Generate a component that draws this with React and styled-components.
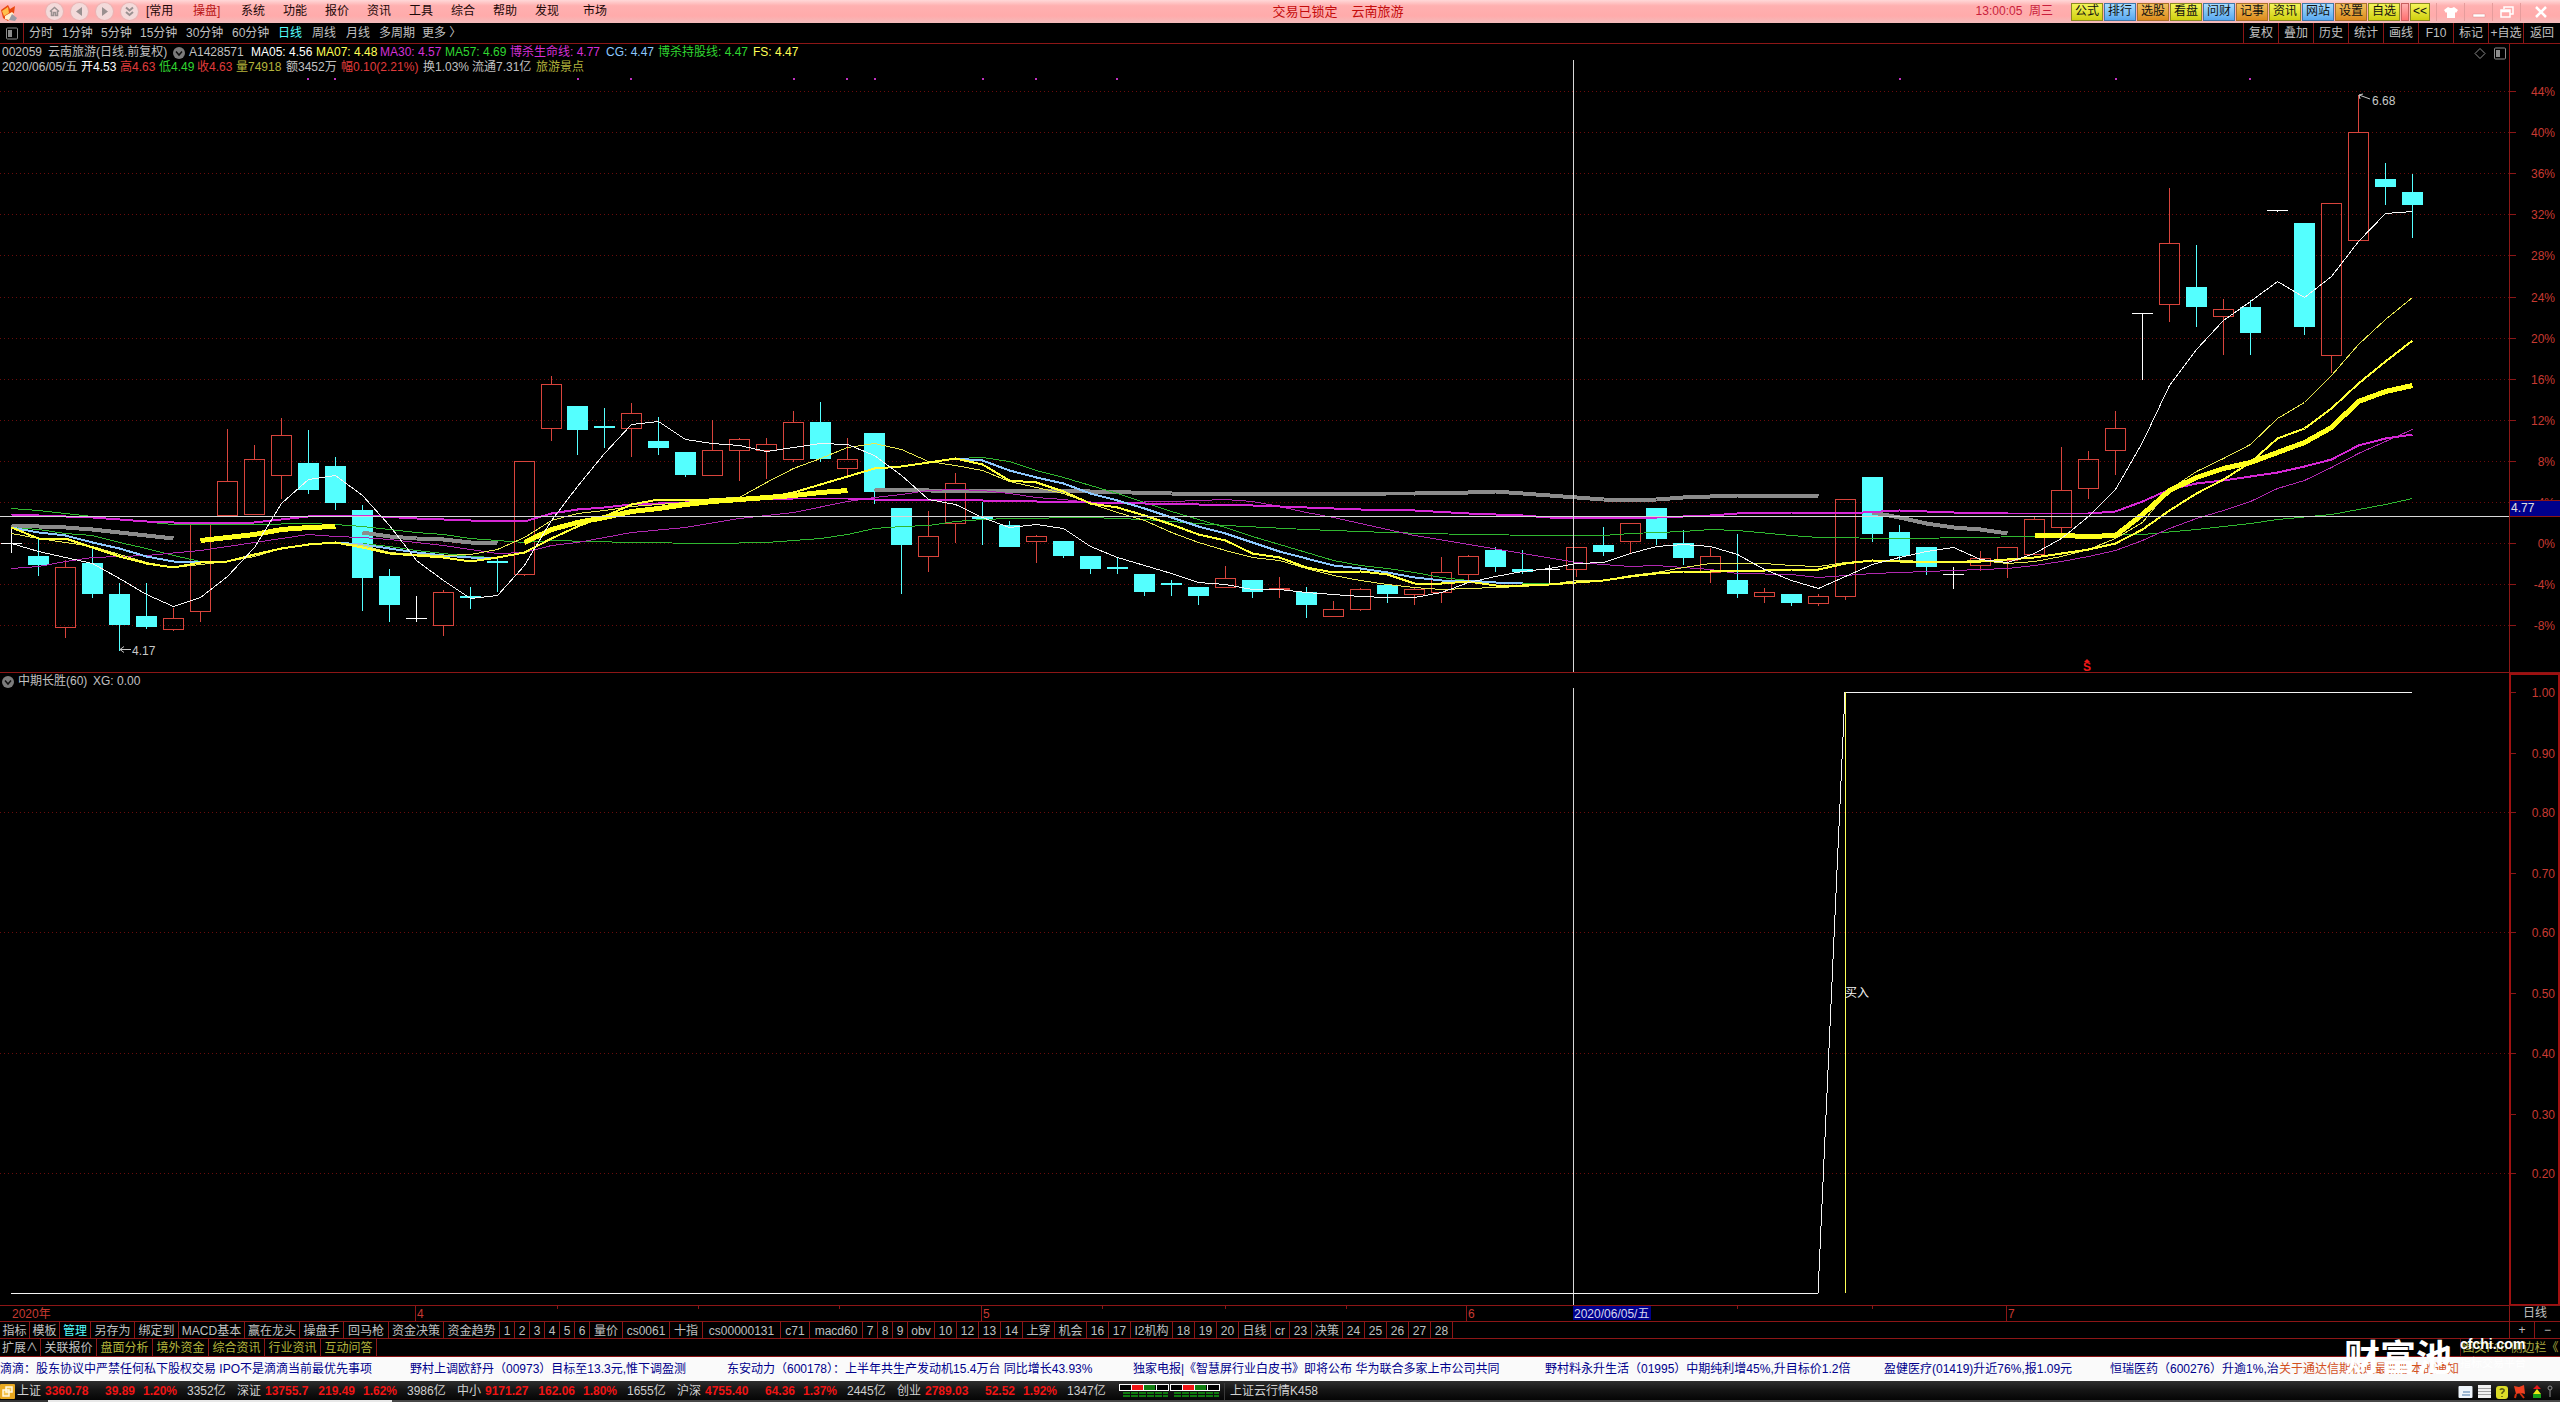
import React from "react";
import styled, { createGlobalStyle } from "styled-components";

const RED = "#8c1616";
const CYAN = "#54ffff";
const SANS = `"Liberation Sans", Arial, "Noto Sans CJK SC", sans-serif`;

const GlobalStyle = createGlobalStyle`
  *, *::before, *::after { box-sizing: border-box; }
  html, body { margin: 0; background: #000; }
  body { font: 12px/15px ${SANS}; color: #c0c0c0; }
  button { font: inherit; color: inherit; background: none; border: 0; padding: 0; margin: 0; white-space: nowrap; }
  a { color: inherit; text-decoration: none; }
`;

const Page = styled.div`
  display: flex;
  flex-direction: column;
  height: 100vh;
  min-height: 600px;
  overflow: hidden;
  position: relative;
`;

/* ---------- title bar ---------- */

const TitleBar = styled.header`
  display: grid;
  grid-template-columns: 1fr auto 1fr;
  align-items: center;
  flex: none;
  height: 23px;
  background: linear-gradient(#ffd8d8, #ffb0b0 25%, #ffabab 70%, #f3bcbc);
  color: #1c0808;
`;

const TitleLeft = styled.div`
  display: flex;
  align-items: center;
`;

const LogoIcon = styled.svg`
  width: 20px;
  height: 20px;
  margin-right: 26px;
`;

const RoundButton = styled.button`
  width: 17px;
  height: 17px;
  margin-right: 8px;
  border-radius: 50%;
  background: #f3dada;
  box-shadow: 0 0 1px 1px #e9b4b4;
  svg { display: block; width: 17px; height: 17px; }
`;

const MenuButton = styled.button`
  width: ${(p) => p.$w}px;
  text-align: left;
  color: ${(p) => (p.$on ? "#b81414" : "#1c0808")};
`;

const Caption = styled.h1`
  display: flex;
  gap: 14px;
  margin: 0;
  padding-left: 116px;
  font: 13px/20px ${SANS};
  color: #c40c0c;
`;

const TitleRight = styled.div`
  display: flex;
  align-items: center;
  justify-content: flex-end;
`;

const Clock = styled.time`
  margin-right: 18px;
  color: #c81e3c;
  white-space: pre;
`;

const tones = {
  yellow: ["#f4f45a", "#d0d010", "#8a8a20"],
  blue: ["#a8dcff", "#58a8f0", "#3f78a8"],
  orange: ["#f2c060", "#dc8c1c", "#a87028"],
  pink: ["#ffb0b0", "#ff7070", "#c86060"],
};

const QuickButton = styled.button`
  width: ${(p) => p.$w || 32}px;
  height: 18px;
  margin-right: 1px;
  border: 1px solid ${(p) => tones[p.$tone][2]};
  background: linear-gradient(${(p) => tones[p.$tone][0]}, ${(p) => tones[p.$tone][1]});
  color: #101010;
  line-height: 15px;
`;

const WindowButtons = styled.div`
  display: flex;
  margin-left: 5px;
`;

const WindowButton = styled.button`
  width: ${(p) => p.$w || 28}px;
  height: 18px;
  border-left: 1px solid #e69c9c;
  display: grid;
  place-items: center;
  svg { width: 18px; height: 14px; }
`;

/* ---------- period bar ---------- */

const PeriodBar = styled.nav`
  display: flex;
  justify-content: space-between;
  flex: none;
  height: 21px;
  border-bottom: 1px solid ${RED};
`;

const PeriodGroup = styled.div`
  display: flex;
`;

const PanelToggle = styled.button`
  width: 24px;
  margin-right: 5px;
  border-right: 1px solid ${RED};
  display: grid;
  place-items: center;
`;

const PeriodButton = styled.button`
  width: ${(p) => p.$w}px;
  text-align: left;
  color: ${(p) => (p.$on ? CYAN : "#c0c0c0")};
`;

const ActionButton = styled.button`
  width: ${(p) => p.$w || 35}px;
  border-left: 1px solid ${RED};
`;

/* ---------- chart panels ---------- */

const ChartPanel = styled.section`
  position: relative;
  flex: ${(p) => p.$grow} 1 0;
  min-height: 0;
  border-bottom: 1px solid ${RED};
`;

const ChartSvg = styled.svg`
  display: block;
  width: 100%;
  height: 100%;
  font: 12px ${SANS};
`;

const Legend = styled.div`
  position: absolute;
  left: 2px;
  top: 1px;
`;

const LegendRow = styled.div`
  display: flex;
  align-items: center;
  height: 15px;
`;

const LegendItem = styled.span`
  width: ${(p) => p.$w}px;
  color: ${(p) => p.$c || "#c0c0c0"};
  white-space: nowrap;
`;

const Fold = styled.button`
  display: block;
  width: 12px;
  height: 12px;
  margin-right: 4px;
  svg { display: block; width: 12px; height: 12px; }
`;

const PanelTools = styled.div`
  position: absolute;
  right: 53px;
  top: 3px;
  display: flex;
  gap: 6px;
  svg { display: block; width: 14px; height: 13px; }
`;

/* ---------- bottom rows ---------- */

const TimeAxis = styled.div`
  flex: none;
  display: flex;
  height: 16px;
  border-bottom: 1px solid ${RED};
`;

const TimeSvg = styled.svg`
  display: block;
  flex: 1;
  min-width: 0;
  height: 15px;
  font: 12px ${SANS};
`;

const AxisCorner = styled.button`
  width: 51px;
  border-left: 1px solid ${RED};
`;

const TabRow = styled.nav`
  flex: none;
  display: flex;
  height: ${(p) => p.$h}px;
  border-bottom: 1px solid ${RED};
`;

const Tab = styled.button`
  width: ${(p) => p.$w}px;
  padding-top: 2px;
  border-right: 1px solid ${RED};
  color: ${(p) => p.$c || "#c0c0c0"};
`;

const TabSpacer = styled.div`
  flex: 1;
`;

const ZoomButton = styled.button`
  width: ${(p) => p.$w}px;
  border-left: 1px solid ${RED};
  line-height: 14px;
`;

const SideBarButton = styled.button`
  width: 100px;
  padding-top: 2px;
  border-left: 1px solid #5a1010;
  color: #a8a840;
`;

const Ticker = styled.div`
  flex: none;
  display: flex;
  align-items: center;
  height: 24px;
  background: #fafafa;
  color: #00008c;
  overflow: hidden;
`;

const TickerLink = styled.a`
  flex: none;
  width: ${(p) => p.$w}px;
  color: ${(p) => (p.$notice ? "#d2501e" : "#00008c")};
  white-space: nowrap;
`;

const StatusBar = styled.footer`
  flex: none;
  display: flex;
  align-items: center;
  height: 19px;
  padding-top: 2px;
  background: linear-gradient(#2e2e2e, #161616 45%, #050505);
  color: #d0d0d0;
`;

const StatusIcon = styled.svg`
  width: 15px;
  height: 15px;
  margin-right: 2px;
`;

const Quote = styled.div`
  display: grid;
  grid-template-columns: 28px 46px 44px 44px 50px;
  width: 220px;
`;

const QuoteValue = styled.span`
  color: #f01414;
  font-weight: bold;
  text-align: ${(p) => p.$align || "left"};
  padding-left: ${(p) => (p.$pad ? 8 : 0)}px;
  white-space: nowrap;
`;

const QuoteVolume = styled.span`
  padding-left: 8px;
`;

const Meter = styled.svg`
  width: 108px;
  height: 17px;
  border-right: 1px solid #3a3a3a;
  margin-right: 5px;
`;

const Tray = styled.svg`
  width: 102px;
  height: 16px;
  margin-left: auto;
`;

const EdgeStrip = styled.div`
  flex: none;
  height: 2px;
  background: linear-gradient(90deg, #333 48px, #e8e8e8 48px, #e8e8e8 392px, #484848 392px);
`;

const Watermark = styled.div`
  position: absolute;
  right: 33px;
  bottom: 27px;
  display: flex;
  gap: 8px;
  color: #fff;
  pointer-events: none;
`;

const WatermarkName = styled.span`
  font: bold 36px/40px "Noto Sans CJK SC", sans-serif;
`;

const WatermarkSide = styled.span`
  display: flex;
  flex-direction: column;
  width: 67px;
  font: bold 14px/18px "Liberation Sans", Arial, sans-serif;
  small { font: 11px/18px "Noto Sans CJK SC", sans-serif; white-space: nowrap; }
`;

/* ---------- data ---------- */

const MENU = [
  ["[常用", 47], ["操盘]", 48, true], ["系统", 42], ["功能", 42], ["报价", 42], ["资讯", 42],
  ["工具", 42], ["综合", 42], ["帮助", 42], ["发现", 48], ["市场", 32],
];

const QUICK = [
  ["公式", "yellow"], ["排行", "blue"], ["选股", "orange"], ["看盘", "yellow"], ["问财", "blue"],
  ["记事", "orange"], ["资讯", "yellow"], ["网站", "blue"], ["设置", "orange"], ["自选", "yellow"],
];

const PERIODS = [
  ["分时", 33], ["1分钟", 39], ["5分钟", 39], ["15分钟", 46], ["30分钟", 46], ["60分钟", 46],
  ["日线", 34, true], ["周线", 34], ["月线", 33], ["多周期", 43], ["更多 〉", 48],
];

const ACTIONS = [
  ["复权"], ["叠加"], ["历史"], ["统计"], ["画线"], ["F10"], ["标记"], ["+自选"], ["返回", 37],
];

const LEGEND_1 = [
  ["A1428571", 62], ["MA05: 4.56", 65, "#ffffff"], ["MA07: 4.48", 64, "#ffff54"],
  ["MA30: 4.57", 65, "#d630d6"], ["MA57: 4.69", 65, "#30d630"],
  ["博杀生命线: 4.77", 96, "#d630d6"], ["CG: 4.47", 52, "#8cc8ff"],
  ["博杀持股线: 4.47", 95, "#30d630"], ["FS: 4.47", 50, "#ffff54"],
];

const LEGEND_2 = [
  ["2020/06/05/五", 79], ["开4.53", 39, "#ffffff"], ["高4.63", 39, "#e03c3c"],
  ["低4.49", 38, "#30d630"], ["收4.63", 39, "#e03c3c"], ["量74918", 50, "#b4b43c"],
  ["额3452万", 55], ["幅0.10(2.21%)", 82, "#e03c3c"], ["换1.03%", 49],
  ["流通7.31亿", 64], ["旅游景点", 50, "#b4b43c"],
];

const TABS = [
  ["指标", 30], ["模板", 30], ["管理", 31, CYAN], ["另存为", 44], ["绑定到", 44], ["MACD基本", 66],
  ["赢在龙头", 55], ["操盘手", 44], ["回马枪", 45], ["资金决策", 55], ["资金趋势", 56],
  ["1", 15], ["2", 15], ["3", 15], ["4", 15], ["5", 15], ["6", 15], ["量价", 33], ["cs0061", 47],
  ["十指", 33], ["cs00000131", 78], ["c71", 29], ["macd60", 53], ["7", 15], ["8", 15], ["9", 15],
  ["obv", 27], ["10", 22], ["12", 22], ["13", 22], ["14", 22], ["上穿", 32], ["机会", 32],
  ["16", 22], ["17", 22], ["I2机构", 42], ["18", 22], ["19", 22], ["20", 22], ["日线", 32],
  ["cr", 19], ["23", 22], ["决策", 31], ["24", 22], ["25", 22], ["26", 22], ["27", 22], ["28", 22],
];

const SUB_TABS = ["关联报价", "盘面分析", "境外资金", "综合资讯", "行业资讯", "互动问答"];

const NEWS = [
  ["滴滴：股东协议中严禁任何私下股权交易 IPO不是滴滴当前最优先事项", 410],
  ["野村上调欧舒丹（00973）目标至13.3元,惟下调盈测", 317],
  ["东安动力（600178）：上半年共生产发动机15.4万台 同比增长43.93%", 406],
  ["独家电报|《智慧屏行业白皮书》即将公布 华为联合多家上市公司共同", 412],
  ["野村料永升生活（01995）中期纯利增45%,升目标价1.2倍", 339],
  ["盈健医疗(01419)升近76%,报1.09元", 226],
  ["恒瑞医药（600276）升逾1%,治", 169],
];

const QUOTES = [
  ["上证", "3360.78", "39.89", "1.20%", "3352亿"],
  ["深证", "13755.7", "219.49", "1.62%", "3986亿"],
  ["中小", "9171.27", "162.06", "1.80%", "1655亿"],
  ["沪深", "4755.40", "64.36", "1.37%", "2445亿"],
  ["创业", "2789.03", "52.52", "1.92%", "1347亿"],
];

/* Candles: kind (u up, d down, w flat), then high, body top, body bottom, low. */
const CANDLES = `w 527 543 544 553|d 538 556 565 576|u 560 567 628 638|d 548 563 594 598|d 583 594 625 651
d 583 616 627 629|u 608 618 630 631|u 523 523 612 622|u 429 481 516 516|u 445 459 515 515
u 418 435 476 499|d 430 463 490 494|d 457 466 503 510|d 505 510 578 611|d 569 576 605 622
w 596 618 619 622|u 590 592 626 636|d 587 596 598 609|d 557 561 563 592|u 461 461 575 576
u 376 384 429 441|d 406 406 430 455|d 408 426 428 448|u 403 413 429 457|d 417 441 448 455
d 452 452 475 477|u 420 450 476 476|u 438 439 451 481|u 438 444 451 479|u 411 422 460 462
d 402 422 459 462|u 438 459 469 477|d 433 433 492 504|d 508 508 545 594|u 511 536 557 572
u 473 483 524 543|d 502 517 519 545|d 521 525 547 547|u 535 536 542 563|d 541 541 556 558
d 556 556 569 574|d 558 567 569 574|d 574 574 592 596|d 580 583 585 596|d 587 587 596 605
u 566 578 588 588|d 580 580 592 598|u 577 588 590 598|d 587 592 605 618|u 601 609 617 617
u 588 589 610 611|d 585 585 594 603|u 588 589 595 605|u 557 572 593 603|u 555 556 575 581
d 547 550 567 572|d 550 569 572 574|w 565 569 570 584|u 547 547 570 577|d 527 545 552 556
u 523 523 542 554|d 508 508 539 545|d 530 543 558 565|u 548 556 573 583|d 534 580 594 598
u 588 592 597 603|d 594 594 603 606|u 594 596 604 606|u 499 499 597 600|d 477 477 534 542
d 525 532 556 560|d 547 547 567 575|w 567 574 575 589|u 551 558 566 571|u 547 547 561 578
u 517 519 555 555|u 447 490 528 538|u 451 459 489 499|u 411 428 451 475|w 313 313 314 380
u 188 243 305 322|d 245 287 307 327|u 299 309 317 355|d 300 307 333 355|w 210 210 211 212
d 223 223 327 335|u 203 203 356 373|u 95 132 241 241|d 163 179 187 205|d 174 192 205 238`
  .split(/[|\n]/)
  .map((row) => {
    const [kind, ...v] = row.trim().split(" ");
    return [kind, ...v.map(Number)];
  });

/* Series: "index:y" jumps to a bar, a bare number is the next bar. */
const SERIES = [
  { c: "#8c8c8c", w: 4, d: "0:525 526 527 529 532 535 538" },
  { c: "#8c8c8c", w: 4, d: "13:532 536 538 539 542 543" },
  { c: "#8c8c8c", w: 4, d: "32:489 34:490 40:491 43:493 47:493 494 51:493 52:493 54:492 491 57:495 59:499 500 499 497 64:495 66:495 496" },
  { c: "#8c8c8c", w: 4, d: "69:512 517 523 527 529 533" },
  { c: "#30b830", w: 1, d: "0:508 510 513 516 519 6:524 9:524 11:523 524 526 529 532 534 538 540 542 540 23:542 26:543 28:542 30:538 534 528 526 525 521 519 518 40:517 42:519 45:525 48:529 51:532 54:534 57:535 59:535 533 62:531 529 530 66:535 537 70:538 73:537 76:535 79:534 81:529 83:523 519 86:514 88:504 498" },
  { c: "#30b830", w: 1, d: "0:527 529 533 535 542 548 555 561" },
  { c: "#30b830", w: 1, d: "12:542 543 546 550 553 556 557" },
  { c: "#30b830", w: 1, d: "35:458 457 461 470 477 485 493 502 511 519 527 536 544 552 560 565 568 572 577 580 582 583 583" },
  { c: "#b028b0", w: 1, d: "0:568 566 561 557 5:555 7:550 9:542 538 534 536 537 539 542 545 549 553 552 545 542 23:532 25:527 27:518 29:512 31:501 497 494 490 489 490 493 497 499 502 502 43:501 45:499 501 506 512 517 523 52:535 54:544 56:553 58:562 60:566 565 567 569 573 66:574 577 69:573 71:571 74:568 565 561 556 550 540 528 518 510 501 488 480 467 453 441 429" },
  { c: "#d628d6", w: 2, d: "0:514 515 516 517 5:521 7:523 9:522 11:516 13:515 15:518 17:520 19:521 513 509 507 504 503 502 27:499 29:498 31:498 499 34:499 36:500 38:501 40:502 42:503 44:504 46:505 48:507 50:509 52:510 54:513 56:515 517 59:517 61:517 63:515 513 66:512 68:513 70:510 72:512 74:513 77:513 511 501 489 483 480 476 472 466 459 445 438 434" },
  { c: "#8cc8ff", w: 2, d: "0:527 532 535 542 548 556 561 562" },
  { c: "#8cc8ff", w: 2, d: "12:542 544 548 552 555 557 558" },
  { c: "#8cc8ff", w: 2, d: "35:458 460 470 477 483 493 500 508 517 526 533 542 551 558 565 568 572 577 580 580 582 583" },
  { c: "#e8e850", w: 1, d: "0:533 538 542 546 554 562 567 564 561 556 548 544 542 545 552 554 555 554 549 537 520 513 510 506 504 502 498 497 482 468 458 447 443 449 461 465 470 481 487 493 503 512 520 532 542 550 557 560 568 575 580 584 587 589 588 587 586 584 580 580 575 572 567 563 563 563 565 566 562 560 560 561 561 560 563 561 556 549 538 522 489 471 458 444 418 402 375 344 319 297" },
  { c: "#ffff38", w: 2, d: "0:527 538 538 547 556 563 567 562 561 554 548 544 542 547 553 555 557 561 557 552 538 526 516 504 499 499 499 498 497 492 484 476 468 466 462 458 464 480 482 491 503 507 515 524 534 540 553 557 567 572 571 574 583 583 581 585 585 584 582 580 576 573 571 571 570 570 569 569 563 560 561 561 561 561 559 557 553 549 543 529 510 493 479 462 438 428 408 383 361 340" },
  { c: "#ffff1c", w: 5, d: "7:540 537 534 529 527 526" },
  { c: "#ffff1c", w: 5, d: "19:542 529 522 517 511 508 504 501 499 497 495 492 490" },
  { c: "#ffff1c", w: 5, d: "75:535 535 536 535 514 490 477 468 462 452 442 427 401 391 385" },
  { c: "#f4f4f4", w: 1, d: "0:543 551 557 563 578 594 606 597 576 547 503 479 475 495 525 560 580 598 595 565 520 486 453 424 421 439 443 445 451 447 443 444 455 475 499 504 517 527 524 528 546 557 565 573 582 584 589 589 592 594 596 597 597 592 582 576 571 568 563 562 553 546 544 546 554 569 580 588 576 564 557 551 547 559 562 553 538 516 489 442 385 349 320 301 281 297 276 241 213 211" },
];

const barX = (i) => Math.floor(11.5 + i * 26.975);

const toPoints = (text) => {
  let i = -1;
  return text
    .split(" ")
    .map((token) => {
      const [a, b] = token.split(":");
      i = b === undefined ? i + 1 : Number(a);
      return `${barX(i) + 0.5},${Number(b === undefined ? a : b) + 0.5}`;
    })
    .join(" ");
};

const PERCENTS = [44, 40, 36, 32, 28, 24, 20, 16, 12, 8, 4, 0, -4, -8].map((v, k) => [
  v,
  Math.round(91 + k * 41.1),
]);

const LEVELS = [
  ["1.00", 692], ["0.90", 753], ["0.80", 812], ["0.70", 873], ["0.60", 932],
  ["0.50", 993], ["0.40", 1053], ["0.30", 1114], ["0.20", 1173],
];

const DOTS = [307, 334, 577, 630, 793, 846, 874, 982, 1035, 1116, 1899, 2115, 2249];
const MONTHS = [[415, "4"], [981, "5"], [1466, "6"], [2006, "7"]];
const WEEKS = [557, 698, 839, 1102, 1225, 1346, 1737, 1872];

/* ---------- pieces ---------- */

function Candle({ index, row }) {
  const [kind, high, top, bottom, low] = row;
  const x = barX(index);
  const h = Math.max(bottom - top, 1);
  if (kind === "u") {
    return (
      <g fill="none" stroke="#d8443c">
        <path d={`M${x + 0.5} ${high}V${top}M${x + 0.5} ${bottom}V${low}`} />
        <rect x={x - 9.5} y={top + 0.5} width="20" height={Math.max(h - 1, 1)} />
      </g>
    );
  }
  return (
    <g fill={kind === "w" ? "#ffffff" : CYAN}>
      <rect x={x} y={high} width="1" height={low - high} />
      <rect x={x - 10} y={top} width="21" height={h} />
    </g>
  );
}

function FoldIcon() {
  return (
    <svg viewBox="0 0 12 12">
      <circle cx="6" cy="6" r="6" fill="#7c7c7c" />
      <path d="M3 4.5l3 3.5 3-3.5" fill="none" stroke="#101010" strokeWidth="1.5" />
    </svg>
  );
}

function PriceChart() {
  return (
    <ChartSvg viewBox="0 44 2560 628" role="img" aria-label="日线">
      <g shapeRendering="crispEdges">
        {PERCENTS.map(([v, y]) => (
          <path key={v} d={`M0 ${y}.5H2509`} stroke="#6a0c0c" strokeDasharray="1 3" />
        ))}
        <path d="M2509.5 44V672" stroke={RED} />
        {PERCENTS.map(([v, y]) => (
          <path key={v} d={`M2510 ${y}.5h6`} stroke={RED} />
        ))}
        {DOTS.map((x) => (
          <rect key={x} x={x} y="78" width="2" height="2" fill="#c030c0" />
        ))}
        {CANDLES.map((row, i) => (
          <Candle key={i} index={i} row={row} />
        ))}
        {SERIES.map((s, i) => (
          <polyline key={i} points={toPoints(s.d)} fill="none" stroke={s.c} strokeWidth={s.w} strokeLinejoin="round" />
        ))}
        <path d="M0 516.5H2509M1573.5 60V672" stroke="#d8d8d8" />
      </g>
      <g fill="none" stroke="#c8c8c8">
        <path d="M131 649.5H120M124 646.5l-4 3 4 3" />
        <path d="M2370 99l-11-4M2363 94l-4 1 1 4" />
      </g>
      <g fill="#c8c8c8">
        <text x="132" y="655">4.17</text>
        <text x="2372" y="105">6.68</text>
      </g>
      <g fill="#f01818">
        <text x="2083" y="671" fontWeight="bold">S</text>
        <path d="M2084 662l3-3 3 3z" />
      </g>
      <g fill="#c83a32" textAnchor="end">
        {PERCENTS.map(([v, y]) => (
          <text key={v} x="2555" y={y + 5}>{`${v}%`}</text>
        ))}
      </g>
      <rect x="2510" y="500" width="50" height="16" fill="#00008c" />
      <path d="M2510 500.5h50M2510 516.5h50" stroke={RED} />
      <text x="2511" y="512" fill="#e0e0e0">4.77</text>
    </ChartSvg>
  );
}

function SignalChart() {
  return (
    <ChartSvg viewBox="0 673 2560 632" role="img" aria-label="中期长胜">
      <g shapeRendering="crispEdges" fill="none">
        {[812, 932, 1053, 1173].map((y) => (
          <path key={y} d={`M0 ${y}.5H2509`} stroke="#6a0c0c" strokeDasharray="1 3" />
        ))}
        <rect x="2510" y="674" width="49" height="631" stroke="#a01010" strokeWidth="2" />
        {LEVELS.map(([v, y]) => (
          <path key={v} d={`M2510 ${y}.5h6`} stroke={RED} />
        ))}
        <path d="M1573.5 688V1305" stroke="#d8d8d8" />
        <polyline points="11,1293.5 1818,1293.5 1845,692.5 2412,692.5" stroke="#f4f4f4" />
        <path d="M1845.5 692V1293" stroke="#ffff54" />
      </g>
      <text x="1845" y="997" fill="#f4f4f4">买入</text>
      <g fill="#c83a32" textAnchor="end">
        {LEVELS.map(([v, y]) => (
          <text key={v} x="2555" y={y + 5}>{v}</text>
        ))}
      </g>
    </ChartSvg>
  );
}

function PanelIcon() {
  return (
    <svg width="14" height="13" viewBox="0 0 14 13">
      <rect x="1.5" y="1" width="11" height="11" rx="1" fill="none" stroke="#8c8c8c" />
      <rect x="3" y="3" width="4" height="7" fill="#8c8c8c" />
    </svg>
  );
}

export default function App() {
  return (
    <>
      <GlobalStyle />
      <Page>
        <TitleBar>
          <TitleLeft>
            <LogoIcon viewBox="0 0 20 20">
              <path d="M1 8l7-5 2 4 5-3-1 7-6 8-5-3z" fill="#e84810" />
              <path d="M2 9l6-4 1 6-5 3z" fill="#ffc04c" />
              <path d="M5 14l7-4 2 2-5 6-4-1z" fill="#fff0d0" />
              <path d="M12 12l5 4-2 3-6-1z" fill="#9a9aa4" />
            </LogoIcon>
            {[
              ["主页", <path d="M4 8.5l4.500-4 4.500 4M5.500 8v4.500h2v-3h2v3h2V8" fill="none" stroke="#9a9090" strokeWidth="1.500" />],
              ["后退", <path d="M11 4v9L5 8.500z" fill="#9a9090" />],
              ["前进", <path d="M6 4v9l6-4.500z" fill="#9a9090" />],
              ["展开", <path d="M5 4.500l3.500 3 3.500-3M5 9l3.500 3L12 9" fill="none" stroke="#9a9090" strokeWidth="2" />],
            ].map(([label, icon]) => (
              <RoundButton key={label} aria-label={label}>
                <svg viewBox="0 0 17 17">{icon}</svg>
              </RoundButton>
            ))}
            {MENU.map(([label, w, on]) => (
              <MenuButton key={label} $w={w} $on={on}>{label}</MenuButton>
            ))}
          </TitleLeft>
          <Caption>
            <span>交易已锁定</span>
            <span>云南旅游</span>
          </Caption>
          <TitleRight>
            <Clock>13:00:05  周三</Clock>
            {QUICK.map(([label, tone]) => (
              <QuickButton key={label} $tone={tone}>{label}</QuickButton>
            ))}
            <QuickButton $tone="pink" $w={8} aria-label="分隔" />
            <QuickButton $tone="yellow" $w={20}>&lt;&lt;</QuickButton>
            <WindowButtons>
              <WindowButton aria-label="换肤">
                <svg viewBox="0 0 18 14"><path d="M6 2l-4 3 2 3 1-1v6h8V7l1 1 2-3-4-3-2 1H8z" fill="#fff" /></svg>
              </WindowButton>
              <WindowButton aria-label="最小化">
                <svg viewBox="0 0 18 14"><path d="M3 9h12v3H3z" fill="#fff" stroke="#d88c8c" strokeWidth=".5" /></svg>
              </WindowButton>
              <WindowButton aria-label="还原">
                <svg viewBox="0 0 18 14"><path d="M6 4V2h9v7h-3M3 5h9v7H3zM3 6.500h9" fill="none" stroke="#fff" strokeWidth="1.500" /></svg>
              </WindowButton>
              <WindowButton $w={40} aria-label="关闭">
                <svg viewBox="0 0 18 14"><path d="M4 2l10 10M14 2L4 12" stroke="#fff" strokeWidth="2.500" /></svg>
              </WindowButton>
            </WindowButtons>
          </TitleRight>
        </TitleBar>

        <PeriodBar>
          <PeriodGroup>
            <PanelToggle aria-label="面板"><PanelIcon /></PanelToggle>
            {PERIODS.map(([label, w, on]) => (
              <PeriodButton key={label} $w={w} $on={on}>{label}</PeriodButton>
            ))}
          </PeriodGroup>
          <PeriodGroup>
            {ACTIONS.map(([label, w]) => (
              <ActionButton key={label} $w={w}>{label}</ActionButton>
            ))}
          </PeriodGroup>
        </PeriodBar>

        <ChartPanel $grow={629}>
          <PriceChart />
          <Legend>
            <LegendRow>
              <LegendItem $w={46}>002059</LegendItem>
              <LegendItem $w={125}>云南旅游(日线.前复权)</LegendItem>
              <Fold aria-label="折叠"><FoldIcon /></Fold>
              {LEGEND_1.map(([t, w, c]) => (
                <LegendItem key={t} $w={w} $c={c}>{t}</LegendItem>
              ))}
            </LegendRow>
            <LegendRow>
              {LEGEND_2.map(([t, w, c]) => (
                <LegendItem key={t} $w={w} $c={c}>{t}</LegendItem>
              ))}
            </LegendRow>
          </Legend>
          <PanelTools>
            <svg viewBox="0 0 14 13"><path d="M7 1.500l5 5-5 5-5-5z" fill="none" stroke="#8c8c8c" /></svg>
            <PanelIcon />
          </PanelTools>
        </ChartPanel>

        <ChartPanel $grow={633}>
          <SignalChart />
          <Legend>
            <LegendRow>
              <Fold aria-label="折叠"><FoldIcon /></Fold>
              <LegendItem $w={75}>中期长胜(60)</LegendItem>
              <LegendItem $w={50}>XG: 0.00</LegendItem>
            </LegendRow>
          </Legend>
        </ChartPanel>

        <TimeAxis>
          <TimeSvg viewBox="0 0 2509 15" preserveAspectRatio="xMinYMin meet">
            <path d={WEEKS.map((x) => `M${x}.500 0v3`).join("")} stroke={RED} />
            <path d={MONTHS.map(([x]) => `M${x}.500 0v15`).join("")} stroke={RED} />
            <g fill="#c83a32">
              <text x="12" y="12">2020年</text>
              {MONTHS.map(([x, t]) => (
                <text key={t} x={x + 2} y="12">{t}</text>
              ))}
            </g>
            <rect x="1573" y="0" width="78" height="14" fill="#00008c" />
            <text x="1574" y="12" fill="#d8d8f0">2020/06/05/五</text>
          </TimeSvg>
          <AxisCorner>日线</AxisCorner>
        </TimeAxis>

        <TabRow $h={17}>
          {TABS.map(([t, w, c]) => (
            <Tab key={t} $w={w} $c={c}>{t}</Tab>
          ))}
          <TabSpacer />
          <ZoomButton $w={25} aria-label="放大">+</ZoomButton>
          <ZoomButton $w={26} aria-label="缩小">−</ZoomButton>
        </TabRow>

        <TabRow $h={18}>
          <Tab $w={41}>扩展∧</Tab>
          {SUB_TABS.map((t, i) => (
            <Tab key={t} $w={56} $c={i ? "#b4b43c" : undefined}>{t}</Tab>
          ))}
          <TabSpacer />
          <SideBarButton>图文F10 侧边栏《</SideBarButton>
        </TabRow>

        <Ticker>
          {NEWS.map(([t, w]) => (
            <TickerLink key={t} href="#news" $w={w}>{t}</TickerLink>
          ))}
          <TickerLink href="#notice" $w={181} $notice>关于通达信期权通最新版本的通知</TickerLink>
        </Ticker>

        <StatusBar>
          <StatusIcon viewBox="0 0 15 15">
            <rect width="15" height="15" rx="1" fill="#e8a820" />
            <path d="M6 3h6v5H6zM3 6h6v6H3z" fill="#f4c450" stroke="#fff8e0" strokeWidth="1.500" />
          </StatusIcon>
          {QUOTES.map(([name, price, change, pct, vol]) => (
            <Quote key={name}>
              <span>{name}</span>
              <QuoteValue>{price}</QuoteValue>
              <QuoteValue $align="right">{change}</QuoteValue>
              <QuoteValue $pad>{pct}</QuoteValue>
              <QuoteVolume>{vol}</QuoteVolume>
            </Quote>
          ))}
          <Meter viewBox="0 0 108 17" shapeRendering="crispEdges">
            {[2, 54].map((x) => (
              <g key={x}>
                <rect x={x + 0.5} y="1.500" width="49" height="6" fill="#000" stroke="#fff" />
                <rect x={x + 13} y="2" width="11" height="5" fill="#f01414" />
                <rect x={x + 25} y="2" width="11" height="5" fill="#107c10" />
                <path d={`M${x + 12.5} 1v6M${x + 24.5} 1v6M${x + 37.5} 1v6`} stroke="#fff" />
                <path d={`M${x + 4} 10h45M${x + 4} 13h45`} stroke="#107c10" strokeWidth="2" strokeDasharray="7 1" />
              </g>
            ))}
          </Meter>
          <span>上证云行情K458</span>
          <Tray viewBox="0 0 102 16">
            <rect x="0.500" y="2" width="14" height="12" rx="1" fill="#eef4fa" />
            <path d="M5 8h7M4 11h8" stroke="#4878a8" />
            <rect x="20" y="1" width="13" height="13" fill="#f0f0f0" />
            <path d="M20 4.500h13M20 7.500h13M20 10.500h13" stroke="#a0a0a0" />
            <rect x="38" y="2" width="12" height="13" rx="3" fill="#dcdc28" />
            <path d="M42 6c1-2 5-1 4 1l-2 2v1M44 12v1" fill="none" stroke="#585810" strokeWidth="1.500" />
            <path d="M56 2l5 1 5-2 1 9-4-1-5 1z" fill="#f04020" />
            <path d="M62 9l4 5M58 10l-1 4" stroke="#d03010" strokeWidth="2" />
            <path d="M79 1l4 4h-8z" fill="#e81818" />
            <path d="M79 5l4 5h-8z" fill="#e8e818" />
            <path d="M75 10h8v4h-8z" fill="#18a018" />
            <circle cx="92" cy="4" r="2" fill="none" stroke="#909090" />
            <path d="M92 6v7" stroke="#909090" />
          </Tray>
        </StatusBar>
        <EdgeStrip />

        <Watermark>
          <WatermarkName>财富池</WatermarkName>
          <WatermarkSide>
            cfchi.com
            <small>指标交易平台</small>
          </WatermarkSide>
        </Watermark>
      </Page>
    </>
  );
}
